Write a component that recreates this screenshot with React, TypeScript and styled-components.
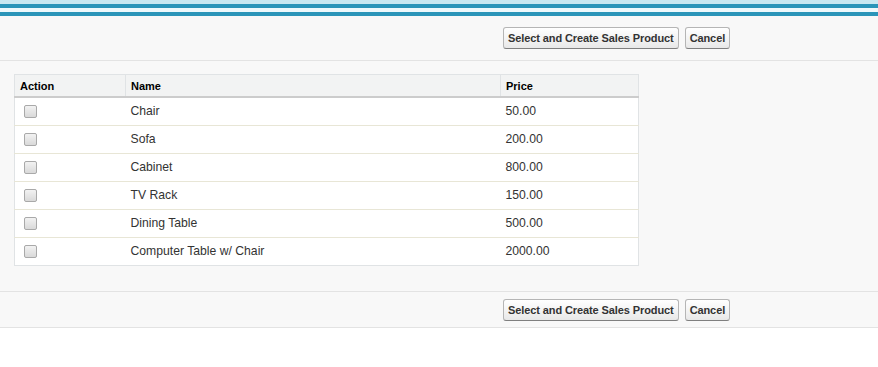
import React from "react";
import styled, { createGlobalStyle } from "styled-components";

const Global = createGlobalStyle`
  html, body { margin: 0; padding: 0; background: #ffffff; }
  body { font-family: Arial, "Liberation Sans", Helvetica, sans-serif; color: #333; }
`;

const Page = styled.div`
  display: flex;
  flex-direction: column;
`;

const Stripes = styled.div`
  height: 16px;
  background: linear-gradient(
    to bottom,
    #c9e8f1 0px, #c9e8f1 4px,
    #2b95b9 4px, #2b95b9 8px,
    #eef9fc 8px, #eef9fc 12px,
    #2b95b9 12px, #2b95b9 16px
  );
`;

const ButtonBar = styled.div<{ $top?: boolean }>`
  display: grid;
  grid-template-columns: 503px auto;
  align-items: center;
  box-sizing: border-box;
  height: ${(p) => (p.$top ? "45px" : "37px")};
  padding-top: ${(p) => (p.$top ? "0" : "2px")};
  background: #f8f8f8;
  border-top: ${(p) => (p.$top ? "none" : "1px solid #e3e3e3")};
  border-bottom: 1px solid #e3e3e3;
`;

const Buttons = styled.div`
  display: flex;
  gap: 6px;
`;

const Button = styled.button`
  height: 22px;
  padding: 0 4px;
  font-family: Arial, "Liberation Sans", sans-serif;
  font-size: 11px;
  font-weight: bold;
  letter-spacing: -0.1px;
  color: #333;
  background: linear-gradient(to bottom, #ffffff 0%, #f4f4f4 50%, #e8e8e8 100%);
  border: 1px solid #b5b5b5;
  border-bottom-color: #7f7f7f;
  border-radius: 3px;
  cursor: pointer;
`;

const Body = styled.div`
  background: #f8f8f8;
  padding: 13px 14px 25px;
`;

const Table = styled.table`
  width: 624px;
  table-layout: fixed;
  border-collapse: collapse;
  background: #fff;
  border: 1px solid #e0e3e5;
`;

const Th = styled.th<{ $w: number }>`
  width: ${(p) => p.$w}px;
  height: 22px;
  padding: 2px 5px 0;
  text-align: left;
  font-size: 11px;
  font-weight: bold;
  color: #000;
  background: #f2f3f3;
  border-left: 1px solid #e0e3e5;
  border-bottom: 2px solid #cccccc;
  box-sizing: border-box;
  &:first-child { border-left: none; }
`;

const Td = styled.td`
  height: 27px;
  padding: 0 5px;
  font-size: 12.2px;
  color: #333;
  border-bottom: 1px solid #e8e6d6;
`;

const Row = styled.tr`
  &:last-child td { border-bottom: none; }
`;

const Check = styled.span`
  display: inline-block;
  width: 11px;
  height: 11px;
  margin-left: 4px;
  vertical-align: middle;
  border: 1px solid #a9a9a9;
  border-radius: 2px;
  background: linear-gradient(to bottom, #f2f2f2, #d9d9d9);
`;

const products = [
  { name: "Chair", price: "50.00" },
  { name: "Sofa", price: "200.00" },
  { name: "Cabinet", price: "800.00" },
  { name: "TV Rack", price: "150.00" },
  { name: "Dining Table", price: "500.00" },
  { name: "Computer Table w/ Chair", price: "2000.00" },
];

const Bar = ({ top }: { top?: boolean }) => (
  <ButtonBar $top={top}>
    <span />
    <Buttons>
      <Button>Select and Create Sales Product</Button>
      <Button>Cancel</Button>
    </Buttons>
  </ButtonBar>
);

export default function App() {
  return (
    <Page>
      <Global />
      <Stripes />
      <Bar top />
      <Body>
        <Table>
          <thead>
            <tr>
              <Th $w={111}>Action</Th>
              <Th $w={375}>Name</Th>
              <Th $w={138}>Price</Th>
            </tr>
          </thead>
          <tbody>
            {products.map((p) => (
              <Row key={p.name}>
                <Td>
                  <Check />
                </Td>
                <Td>{p.name}</Td>
                <Td>{p.price}</Td>
              </Row>
            ))}
          </tbody>
        </Table>
      </Body>
      <Bar />
    </Page>
  );
}
